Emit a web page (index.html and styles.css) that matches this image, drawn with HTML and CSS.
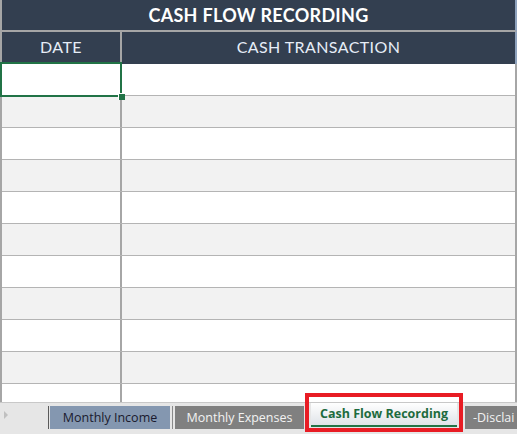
FILE: index.html
```html
<!DOCTYPE html>
<html>
<head>
<meta charset="utf-8">
<link rel="stylesheet" href="styles.css">
</head>
<body>
<div class="sheet">
  <div class="title">CASH FLOW RECORDING</div>
  <div class="head">
    <div class="hcell date">DATE</div>
    <div class="hcell trans">CASH TRANSACTION</div>
  </div>
  <div class="grid">
    <div class="rows">
      <div class="row"><div class="c1"></div><div class="c2"></div></div>
      <div class="row alt"><div class="c1"></div><div class="c2"></div></div>
      <div class="row"><div class="c1"></div><div class="c2"></div></div>
      <div class="row alt"><div class="c1"></div><div class="c2"></div></div>
      <div class="row"><div class="c1"></div><div class="c2"></div></div>
      <div class="row alt"><div class="c1"></div><div class="c2"></div></div>
      <div class="row"><div class="c1"></div><div class="c2"></div></div>
      <div class="row alt"><div class="c1"></div><div class="c2"></div></div>
      <div class="row"><div class="c1"></div><div class="c2"></div></div>
      <div class="row alt"><div class="c1"></div><div class="c2"></div></div>
      <div class="row"><div class="c1"></div><div class="c2"></div></div>
    </div>
    <div class="selection"><span class="handle"></span></div>
  </div>
  <div class="tabbar">
    <span class="arrow"></span>
    <span class="sep sep-first"></span>
    <div class="tab income">Monthly Income</div>
    <span class="sep sep-mid"></span>
    <div class="tab expenses">Monthly Expenses</div>
    <div class="active-wrap"><div class="tab active">Cash Flow Recording</div></div>
    <div class="tab disclaimer">-Disclai</div>
  </div>
</div>
</body>
</html>
```
FILE: styles.css
```css
html, body {
  margin: 0;
  padding: 0;
  background: #ffffff;
}
.sheet {
  width: 517px;
  height: 434px;
  overflow: hidden;
  display: flex;
  flex-direction: column;
}
.title {
  height: 32px;
  box-sizing: border-box;
  background: #333f50;
  color: #ffffff;
  font-family: "Lato", sans-serif;
  font-weight: 700;
  font-size: 18px;
  letter-spacing: 0.3px;
  line-height: 31px;
  text-align: center;
  border-left: 2px solid #a6a6a6;
  border-right: 2px solid #8ea2bd;
  border-bottom: 2px solid #a6a6a6;
}
.head {
  display: flex;
  height: 32px;
  background: #333f50;
  border-left: 2px solid #a6a6a6;
  border-right: 2px solid #8ea2bd;
}
.hcell {
  color: #e6edf7;
  font-family: "Lato", sans-serif;
  font-weight: 400;
  font-size: 16px;
  letter-spacing: 0.4px;
  line-height: 30px;
  text-align: center;
}
.date {
  width: 118px;
  border-right: 2px solid #a6a6a6;
}
.trans {
  flex: 1;
}
.grid {
  position: relative;
}
.rows {
  height: 338px;
  overflow: hidden;
  border-left: 2px solid #a6a6a6;
  border-right: 2px solid #a6a6a6;
}
.row {
  display: flex;
  height: 31px;
  border-bottom: 1px solid #b4b4b4;
  background: #ffffff;
}
.row.alt {
  background: #f2f2f2;
}
.c1 {
  width: 118px;
  border-right: 2px solid #a6a6a6;
}
.c2 {
  flex: 1;
}
.selection {
  position: absolute;
  left: 0;
  top: -2px;
  width: 118px;
  height: 31px;
  border: 2px solid #217346;
}
.handle {
  position: absolute;
  right: -5px;
  bottom: -5px;
  width: 6px;
  height: 6px;
  background: #217346;
  border-left: 1px solid #ffffff;
  border-top: 1px solid #ffffff;
}
.tabbar {
  flex: 1;
  display: flex;
  align-items: flex-start;
  background: #e6e6e6;
  border-top: 1px solid #c8c8c8;
  font-family: "Open Sans", sans-serif;
  font-size: 12.5px;
}
.arrow {
  width: 0;
  height: 0;
  margin: 8px 0 0 4px;
  border-top: 4px solid transparent;
  border-bottom: 4px solid transparent;
  border-left: 4px solid #c0c0c0;
}
.sep {
  width: 1px;
  height: 23px;
  margin-top: 3px;
}
.sep-first {
  margin-left: 40px;
  background: #5a5a5a;
}
.sep-mid {
  margin-left: 2px;
  background: #8a8a8a;
}
.tab {
  height: 23px;
  line-height: 23px;
  margin-top: 3px;
  text-align: center;
  white-space: nowrap;
}
.income {
  width: 120px;
  margin-left: 1px;
  background: #8497b0;
  color: #1a1a2e;
}
.expenses {
  width: 129px;
  margin-left: 2px;
  background: #808080;
  color: #f2f2f2;
}
.active-wrap {
  position: relative;
  z-index: 1;
  margin-top: -10px;
  margin-left: 1px;
  width: 150px;
  height: 31px;
  border: 4px solid #e81c24;
}
.active {
  margin-top: 6px;
  margin-left: 2px;
  width: 146px;
  height: 22px;
  line-height: 22px;
  background: linear-gradient(#ffffff, #dfe3e8);
  border-bottom: 2px solid #217346;
  color: #1d6b3e;
  font-weight: 700;
}
.disclaimer {
  flex: 1;
  margin-left: 2px;
  background: #808080;
  color: #f2f2f2;
  text-align: left;
  padding-left: 8px;
}
```
